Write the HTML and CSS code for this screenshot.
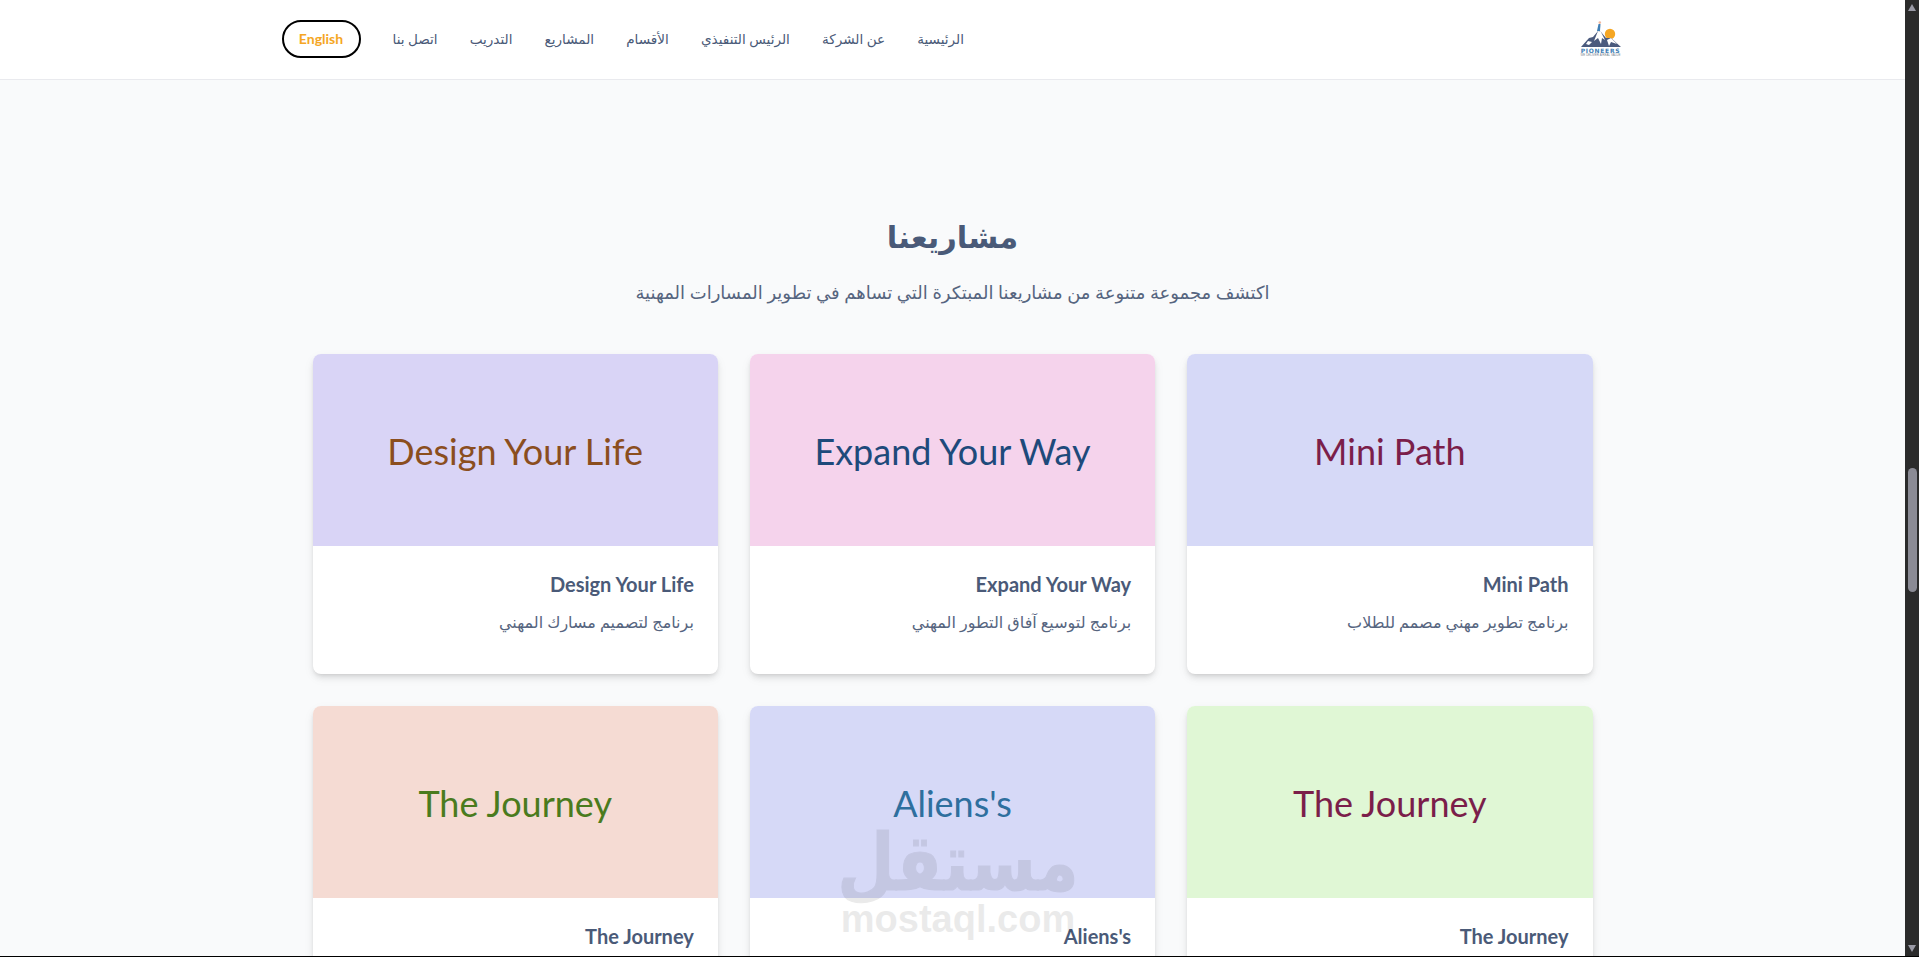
FILE: index.html
```html
<!DOCTYPE html>
<html lang="ar" dir="rtl">
<head>
    <meta charset="UTF-8">
    <title>مشاريعنا</title>
    <link rel="stylesheet" href="styles.css">
</head>
<body>
    <div class="window">
        <div class="page">
            <header class="nav">
                <div class="nav-inner">
                    <a class="logo" href="#">
                        <svg class="logo-art" viewBox="0 0 42 27" width="42" height="27">
                            <circle cx="30" cy="13" r="5.2" fill="#f5a623"/>
                            <path d="M1 26 L9 17 L13 16 L18 10 L21 11 L26 17 L31 17 L41 26 Z" fill="#4a5a7d"/>
                            <path d="M18 10 L21 11 L25 19 L22 17 L21 23 L18 17 L14 20 Z" fill="#fff"/>
                            <path d="M31 17 L37 23 L31 21 L29 25 L27 19 Z" fill="#fff"/>
                            <path d="M8 20 L12 21 L9 24 L6 23 Z" fill="#fff"/>
                            <path d="M17 10 L18.5 3 L20.5 3 L20 10 Z" fill="#3f7fb5"/>
                            <circle cx="19.8" cy="1.6" r="1.3" fill="#f0b9a0"/>
                        </svg>
                        <span class="logo-name" dir="ltr">PIONEERS</span>
                        <span class="logo-tag" dir="ltr">WE DELIVER A REAL VALUE</span>
                    </a>
                    <nav class="menu">
                        <a href="#">الرئيسية</a>
                        <a href="#">عن الشركة</a>
                        <a href="#">الرئيس التنفيذي</a>
                        <a href="#">الأقسام</a>
                        <a href="#">المشاريع</a>
                        <a href="#">التدريب</a>
                        <a href="#">اتصل بنا</a>
                        <button type="button" class="lang">English</button>
                    </nav>
                </div>
            </header>

            <section class="projects">
                <h1>مشاريعنا</h1>
                <p class="lead">اكتشف مجموعة متنوعة من مشاريعنا المبتكرة التي تساهم في تطوير المسارات المهنية</p>
                <div class="grid">
                    <article class="card">
                        <div class="thumb thumb-blue" dir="ltr"><span class="ink-maroon">Mini Path</span></div>
                        <div class="card-body">
                            <h3>Mini Path</h3>
                            <p>برنامج تطوير مهني مصمم للطلاب</p>
                        </div>
                    </article>
                    <article class="card">
                        <div class="thumb thumb-pink" dir="ltr"><span class="ink-navy">Expand Your Way</span></div>
                        <div class="card-body">
                            <h3>Expand Your Way</h3>
                            <p>برنامج لتوسيع آفاق التطور المهني</p>
                        </div>
                    </article>
                    <article class="card">
                        <div class="thumb thumb-violet" dir="ltr"><span class="ink-brown">Design Your Life</span></div>
                        <div class="card-body">
                            <h3>Design Your Life</h3>
                            <p>برنامج لتصميم مسارك المهني</p>
                        </div>
                    </article>
                    <article class="card">
                        <div class="thumb thumb-green" dir="ltr"><span class="ink-maroon">The Journey</span></div>
                        <div class="card-body">
                            <h3>The Journey</h3>
                        </div>
                    </article>
                    <article class="card">
                        <div class="thumb thumb-blue" dir="ltr"><span class="ink-steel">Aliens's</span></div>
                        <div class="card-body">
                            <h3>Aliens's</h3>
                        </div>
                    </article>
                    <article class="card">
                        <div class="thumb thumb-peach" dir="ltr"><span class="ink-olive">The Journey</span></div>
                        <div class="card-body">
                            <h3>The Journey</h3>
                        </div>
                    </article>
                </div>
            </section>

            <div class="watermark">
                <span class="wm-ar">مستقل</span>
                <span class="wm-en">mostaql.com</span>
            </div>
        </div>
        <div class="scrollbar">
            <div class="scroll-up"></div>
            <div class="scroll-thumb"></div>
            <div class="scroll-down"></div>
        </div>
    </div>
</body>
</html>
```

FILE: styles.css
```css
* { box-sizing: border-box; }
html, body { margin: 0; height: 957px; overflow: hidden; }
body { background-color: #000; color: #4a5a78; font-family: Lato, "DejaVu Sans", sans-serif; }
h1, h3, p { margin: 0; }
a { color: inherit; text-decoration: none; }

.window { display: flex; flex-direction: row-reverse; height: 956px; }
.page { flex: 1; position: relative; overflow: hidden; background-color: #f9fafb; }

.nav { height: 80px; background-color: #fff; border-bottom: 1px solid #e9eaee; }
.nav-inner { max-width: 1400px; height: 100%; margin: 0 auto; padding: 0 29px 2px; display: flex; align-items: center; justify-content: space-between; }
.logo { display: flex; flex-direction: column; align-items: center; width: 42px; margin-right: 2px; }
.logo-art { display: block; }
.logo-name { font-family: "DejaVu Sans", sans-serif; font-size: 6px; font-weight: 700; letter-spacing: 0.7px; line-height: 5px; color: #3f7fb5; white-space: nowrap; }
.logo-tag { font-family: "Liberation Sans", sans-serif; font-size: 3px; line-height: 4px; color: #777f8f; white-space: nowrap; }
.menu { display: flex; align-items: center; gap: 32px; font-size: 13.6px; }
.lang { width: 79px; height: 38px; border: 2px solid #000; border-radius: 19px; background: #fff; color: #f5a623; font-family: Lato, sans-serif; font-size: 14px; font-weight: 700; }

.projects { max-width: 1280px; margin: 0 auto; padding-top: 138px; }
.projects h1 { text-align: center; font-size: 30.5px; line-height: 36px; font-weight: 700; }
.lead { text-align: center; font-size: 18px; line-height: 28px; margin-top: 24px; margin-bottom: 48px; color: #56657f; }

.grid { display: grid; grid-template-columns: repeat(3, 1fr); gap: 32px; }
.card { height: 320px; background-color: #fff; border-radius: 8px; overflow: hidden; box-shadow: 0 4px 6px -1px rgba(0,0,0,0.1), 0 2px 4px -2px rgba(0,0,0,0.1), 0 4px 12px rgba(0,0,0,0.05); }
.thumb { height: 192px; padding-top: 2px; display: flex; align-items: center; justify-content: center; font-size: 36px; }
.card-body { padding: 24px; }
.card-body h3 { font-size: 20px; line-height: 28px; font-weight: 700; }
.card-body p { font-size: 16px; line-height: 24px; margin-top: 12px; color: #56657f; }

.thumb-violet { background-color: #d9d4f6; }
.thumb-pink { background-color: #f5d3ec; }
.thumb-blue { background-color: #d6d9f7; }
.thumb-peach { background-color: #f5dbd3; }
.thumb-green { background-color: #e0f7d5; }
.ink-brown { color: #8b4e1e; }
.ink-navy { color: #1e4a7b; }
.ink-maroon { color: #7b1e4a; }
.ink-olive { color: #4a7b1e; }
.ink-steel { color: #2e6f9e; }

.watermark { position: absolute; left: 842px; top: 827px; width: 232px; display: flex; flex-direction: column; align-items: center; opacity: 0.08; color: #000; pointer-events: none; }
.wm-ar { font-family: "DejaVu Sans", sans-serif; font-size: 66px; font-weight: 700; line-height: 74px; transform: scaleY(1.2); -webkit-text-stroke: 1px #000; }
.wm-en { font-family: "Liberation Sans", sans-serif; font-size: 38px; font-weight: 700; line-height: 36px; }

.scrollbar { width: 14px; background-color: #2b2b2b; display: flex; flex-direction: column; align-items: center; padding: 4px 0; }
.scroll-up { width: 0; height: 0; border-left: 4.5px solid transparent; border-right: 4.5px solid transparent; border-bottom: 7px solid #9a9aa6; }
.scroll-thumb { width: 9px; height: 124px; margin-top: 457px; background-color: #8b8b95; border-radius: 5px; }
.scroll-down { width: 0; height: 0; margin-top: auto; border-left: 4.5px solid transparent; border-right: 4.5px solid transparent; border-top: 7px solid #9a9aa6; }
```
